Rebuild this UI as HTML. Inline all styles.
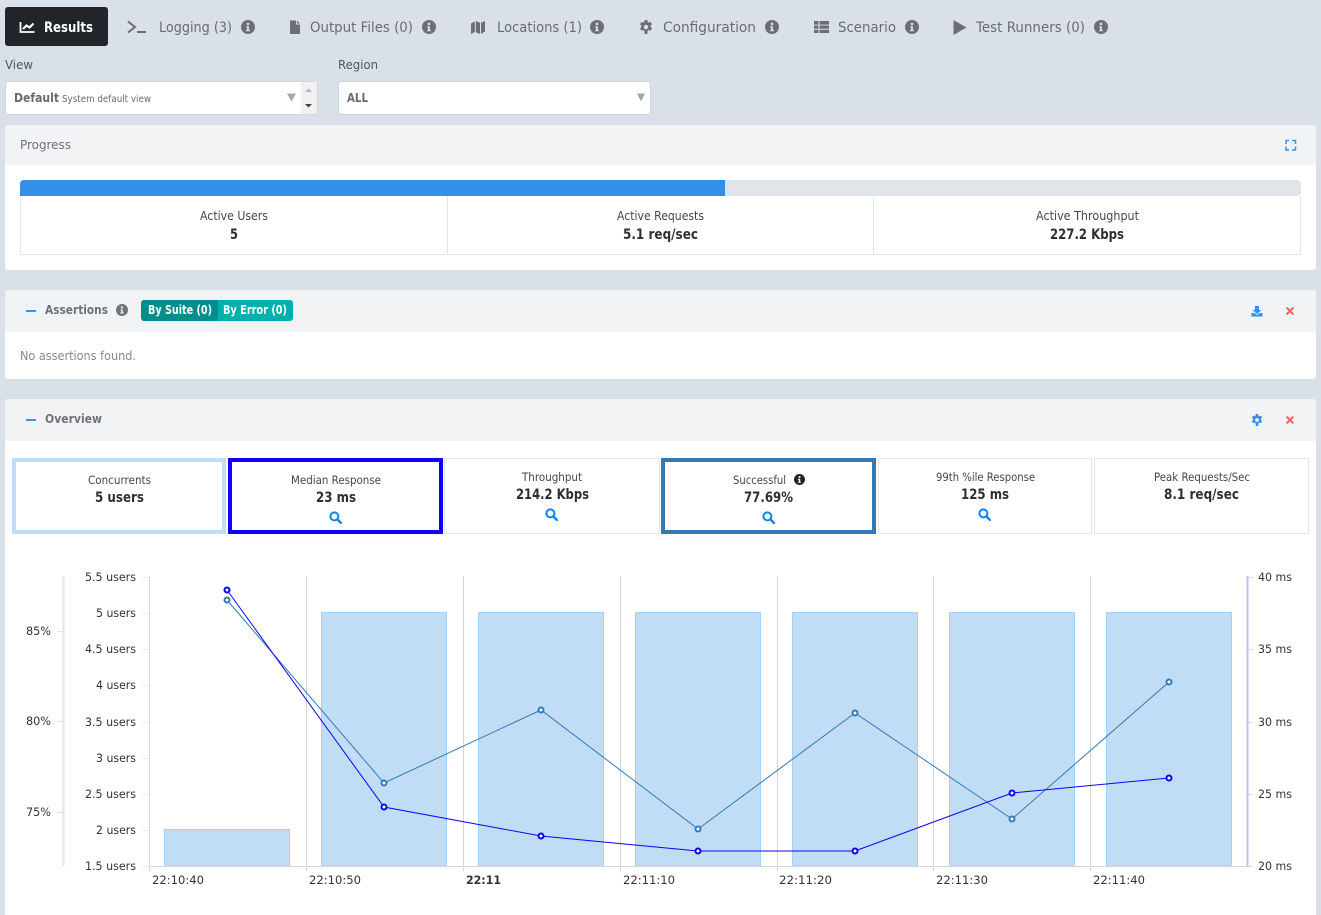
<!DOCTYPE html>
<html><head><meta charset="utf-8"><title>Results</title>
<style>
html,body{margin:0;padding:0;width:1321px;height:915px;overflow:hidden;background:#d9e0e8}
svg{display:block;position:absolute;left:0;top:0}
text{font-family:"DejaVu Sans","Liberation Sans",sans-serif;font-size:12px;fill:#6c6c74}
.tab{font-size:14px;fill:#6a6b72}
.b{font-weight:700}
.lab{fill:#42474d;font-size:12.500px}
.mt{fill:#42474d;font-size:11.500px}
.mv{fill:#2b3036;font-size:14px;font-weight:700}
.ax{fill:#333;font-size:11.500px}
</style></head><body>
<svg width="1321" height="915" viewBox="0 0 1321 915" xmlns="http://www.w3.org/2000/svg">
<defs>
<symbol id="info" viewBox="0 0 14 14"><path fill="currentColor" fill-rule="evenodd" d="M7 0a7 7 0 1 1 0 14A7 7 0 0 1 7 0zM5.800 2.800v2.300h2.400V2.800zM5.200 6.200v1.400h.9v2.200h-.9v1.400h3.600V9.800h-.9V6.200z"/></symbol>
<symbol id="srch" viewBox="0 0 14 14"><circle cx="5.800" cy="5.800" r="4.300" fill="none" stroke="#0d86f2" stroke-width="2.200"/><path d="M9 9l3.800 3.800" stroke="#0d86f2" stroke-width="2.600" stroke-linecap="round"/></symbol>
<symbol id="gear" viewBox="0 0 14 14"><path fill="currentColor" fill-rule="evenodd" d="M5.700 0h2.600l.4 1.900 1.200.7 1.800-.6L13 4.300l-1.400 1.300v1.400L13 8.300l-1.300 2.300-1.800-.6-1.200.7L8.300 14H5.700l-.4-3.300-1.200-.7-1.800.6L1 8.300l1.400-1.300V5.600L1 4.300 2.300 2l1.800.6 1.200-.7zM7 4.800a2.200 2.200 0 1 0 0 4.400 2.200 2.200 0 0 0 0-4.400z"/></symbol>
<symbol id="xx" viewBox="0 0 10 10"><path d="M1.500 1.500l7 7M8.500 1.500l-7 7" stroke="#f9605f" stroke-width="2.600" stroke-linecap="round"/></symbol>
</defs>

<!-- Tabs -->
<rect x="5" y="7" width="103" height="39" rx="3" fill="#212529"/>
<g fill="none" stroke="#fff"><path d="M20.500 22v10H34.500" stroke-width="1.800"/><path d="M23 29l3.500-3.500 3 2 4-4" stroke-width="2.200"/></g>
<text x="44" y="32" textLength="49" lengthAdjust="spacingAndGlyphs" class="b" style="font-size:14.500px;fill:#fff">Results</text>

<path d="M128 21.500l7 5.500-7 5.500" fill="none" stroke="#6d6e75" stroke-width="2"/><rect x="137" y="31" width="9" height="2" fill="#6d6e75"/>
<text x="159" y="32" textLength="73" lengthAdjust="spacingAndGlyphs" class="tab">Logging (3)</text>
<use href="#info" x="241" y="20" width="14" height="14" color="#6d6e75"/>

<path d="M290 20.500h6v4h4v9.500h-10zM297 20.500l3 3h-3z" fill="#6d6e75"/>
<text x="310" y="32" textLength="103" lengthAdjust="spacingAndGlyphs" class="tab">Output Files (0)</text>
<use href="#info" x="422" y="20" width="14" height="14" color="#6d6e75"/>

<path d="M471 23.500l3.800-2v10.500l-3.800 2zM475.800 21l4.200 1.800V34l-4.200-1.800zM481 22.800l4-1.800v10.500l-4 2.500z" fill="#6d6e75"/>
<text x="497" y="32" textLength="85" lengthAdjust="spacingAndGlyphs" class="tab">Locations (1)</text>
<use href="#info" x="590" y="20" width="14" height="14" color="#6d6e75"/>

<use href="#gear" x="639" y="20" width="14" height="14" color="#6d6e75"/>
<text x="663" y="32" textLength="93" lengthAdjust="spacingAndGlyphs" class="tab">Configuration</text>
<use href="#info" x="765" y="20" width="14" height="14" color="#6d6e75"/>

<path d="M814 21h4.500v3.600H814zM819.500 21H829v3.600h-9.500zM814 25.500h4.500v3.300H814zM819.500 25.500H829v3.300h-9.500zM814 29.700h4.500V33H814zM819.500 29.700H829V33h-9.500z" fill="#6d6e75"/>
<text x="838" y="32" textLength="58" lengthAdjust="spacingAndGlyphs" class="tab">Scenario</text>
<use href="#info" x="905" y="20" width="14" height="14" color="#6d6e75"/>

<path d="M953.500 20l13 7.500-13 7.500z" fill="#6d6e75"/>
<text x="976" y="32" textLength="109" lengthAdjust="spacingAndGlyphs" class="tab">Test Runners (0)</text>
<use href="#info" x="1094" y="20" width="14" height="14" color="#6d6e75"/>

<!-- Selects -->
<text x="5" y="69" textLength="28" lengthAdjust="spacingAndGlyphs" style="font-size:12.500px;fill:#50565d">View</text>
<text x="338" y="69" textLength="40" lengthAdjust="spacingAndGlyphs" style="font-size:12.500px;fill:#50565d">Region</text>
<rect x="5.500" y="81.500" width="312" height="33" rx="3" fill="#fff" stroke="#cfd5db"/>
<path d="M301 82h16v32h-16z" fill="#f1f1f1"/>
<text x="14" y="102" textLength="45" lengthAdjust="spacingAndGlyphs" class="b" style="font-size:12.500px;fill:#686b71">Default</text>
<text x="62" y="102" textLength="89" lengthAdjust="spacingAndGlyphs" style="font-size:10px;fill:#686b71">System default view</text>
<path d="M287 93.500h9l-4.500 8z" fill="#a4a7ac"/>
<path d="M305 92l3.500-3.500L312 92z" fill="#b5b5b5"/><path d="M305 104h7l-3.500 3.500z" fill="#444"/>
<rect x="338.500" y="81.500" width="312" height="33" rx="3" fill="#fff" stroke="#cfd5db"/>
<text x="347" y="102" textLength="21" lengthAdjust="spacingAndGlyphs" class="b" style="font-size:12.500px;fill:#686b71">ALL</text>
<path d="M637 93.500h8l-4 8z" fill="#a4a7ac"/>

<!-- Progress panel -->
<rect x="5" y="125" width="1311" height="145" rx="3" fill="#fff"/>
<path d="M5 165v-37a3 3 0 0 1 3-3h1305a3 3 0 0 1 3 3v37z" fill="#f1f3f5"/>
<text x="20" y="149" textLength="51" lengthAdjust="spacingAndGlyphs" style="font-size:12.500px;fill:#6f7379">Progress</text>
<path d="M1286 144v-3.500h3M1292 140.500h3.500v3.500M1295.500 146.500v3.500h-3.500M1289 150h-3v-3.500" fill="none" stroke="#3a97ec" stroke-width="1.500"/>
<rect x="20" y="180" width="1281" height="16" rx="4" fill="#e0e5ea"/>
<path d="M725 180H24a4 4 0 0 0-4 4v12h705z" fill="#3490e6"/>
<path d="M20.500 196v58.500h1280V196M447.500 196v58M873.500 196v58" fill="none" stroke="#e4e7ea"/>
<text x="200" y="220" textLength="68" lengthAdjust="spacingAndGlyphs" class="lab">Active Users</text>
<text x="230" y="239" textLength="8" lengthAdjust="spacingAndGlyphs" class="mv">5</text>
<text x="617" y="220" textLength="87" lengthAdjust="spacingAndGlyphs" class="lab">Active Requests</text>
<text x="623" y="239" textLength="75" lengthAdjust="spacingAndGlyphs" class="mv">5.1 req/sec</text>
<text x="1036" y="220" textLength="103" lengthAdjust="spacingAndGlyphs" class="lab">Active Throughput</text>
<text x="1050" y="239" textLength="74" lengthAdjust="spacingAndGlyphs" class="mv">227.2 Kbps</text>

<!-- Assertions panel -->
<rect x="5" y="290" width="1311" height="89" rx="3" fill="#fff"/>
<path d="M5 332v-39a3 3 0 0 1 3-3h1305a3 3 0 0 1 3 3v39z" fill="#f1f3f5"/>
<rect x="26" y="310" width="10" height="2" fill="#3a93e8"/>
<text x="45" y="314" textLength="63" lengthAdjust="spacingAndGlyphs" class="b" style="font-size:12.500px;fill:#6f7379">Assertions</text>
<use href="#info" x="116" y="304" width="12" height="12" color="#6f7379"/>
<path d="M218 300h-74a3 3 0 0 0-3 3v15a3 3 0 0 0 3 3h74z" fill="#008d8b"/>
<path d="M218 300h72a3 3 0 0 1 3 3v15a3 3 0 0 1-3 3h-72z" fill="#00b0ad"/>
<text x="148" y="314" textLength="64" lengthAdjust="spacingAndGlyphs" class="b" style="font-size:12.500px;fill:#fff">By Suite (0)</text>
<text x="223" y="314" textLength="64" lengthAdjust="spacingAndGlyphs" class="b" style="font-size:12.500px;fill:#fff">By Error (0)</text>
<text x="20" y="360" textLength="116" lengthAdjust="spacingAndGlyphs" style="font-size:12.500px;fill:#85898e">No assertions found.</text>
<path d="M1255 306h4v4h2.500l-4.500 4-4.500-4h2.500z" fill="#3a8fe6"/><path d="M1251.500 313h3l2.500 2 2.500-2h3v3.500h-11z" fill="#3a8fe6"/>
<use href="#xx" x="1286" y="307" width="8" height="8"/>

<!-- Overview panel -->
<rect x="5" y="399" width="1311" height="520" rx="3" fill="#fff"/>
<path d="M5 441v-39a3 3 0 0 1 3-3h1305a3 3 0 0 1 3 3v39z" fill="#f1f3f5"/>
<rect x="26" y="419" width="10" height="2" fill="#3a93e8"/>
<text x="45" y="423" textLength="57" lengthAdjust="spacingAndGlyphs" class="b" style="font-size:12.500px;fill:#6f7379">Overview</text>
<use href="#gear" x="1251" y="414" width="12" height="12" color="#3a8fe6"/>
<use href="#xx" x="1286" y="416" width="8" height="8"/>

<!-- Cards -->
<rect x="14" y="460" width="210" height="72" fill="#fff" stroke="#c0ddf5" stroke-width="4"/>
<text x="88" y="484" textLength="63" lengthAdjust="spacingAndGlyphs" class="mt">Concurrents</text>
<text x="95" y="502" textLength="49" lengthAdjust="spacingAndGlyphs" class="mv">5 users</text>

<rect x="230" y="460" width="211" height="72" fill="#fff" stroke="#1000f5" stroke-width="4"/>
<text x="291" y="484" textLength="90" lengthAdjust="spacingAndGlyphs" class="mt">Median Response</text>
<text x="316" y="502" textLength="40" lengthAdjust="spacingAndGlyphs" class="mv">23 ms</text>
<use href="#srch" x="329" y="511" width="13" height="13"/>

<rect x="444.500" y="458.500" width="215" height="75" fill="#fff" stroke="#e4e7ea"/>
<text x="522" y="481" textLength="60" lengthAdjust="spacingAndGlyphs" class="mt">Throughput</text>
<text x="516" y="499" textLength="73" lengthAdjust="spacingAndGlyphs" class="mv">214.2 Kbps</text>
<use href="#srch" x="545" y="508" width="13" height="13"/>

<rect x="663" y="460" width="211" height="72" fill="#fff" stroke="#337ab7" stroke-width="4"/>
<text x="733" y="484" textLength="53" lengthAdjust="spacingAndGlyphs" class="mt">Successful</text>
<use href="#info" x="794" y="474" width="11" height="11" color="#212529"/>
<text x="744" y="502" textLength="49" lengthAdjust="spacingAndGlyphs" class="mv">77.69%</text>
<use href="#srch" x="762" y="511" width="13" height="13"/>

<rect x="878.500" y="458.500" width="213" height="75" fill="#fff" stroke="#e4e7ea"/>
<text x="936" y="481" textLength="99" lengthAdjust="spacingAndGlyphs" class="mt">99th %ile Response</text>
<text x="961" y="499" textLength="48" lengthAdjust="spacingAndGlyphs" class="mv">125 ms</text>
<use href="#srch" x="978" y="508" width="13" height="13"/>

<rect x="1094.500" y="458.500" width="214" height="75" fill="#fff" stroke="#e4e7ea"/>
<text x="1154" y="481" textLength="96" lengthAdjust="spacingAndGlyphs" class="mt">Peak Requests/Sec</text>
<text x="1164" y="499" textLength="75" lengthAdjust="spacingAndGlyphs" class="mv">8.1 req/sec</text>

<!-- Chart -->
<g fill="#c1ddf6" stroke="#a9d0f1">
<rect x="164.500" y="829.500" width="125" height="36.500"/>
<rect x="321.500" y="612.500" width="125" height="253.500"/>
<rect x="478.500" y="612.500" width="125" height="253.500"/>
<rect x="635.500" y="612.500" width="125" height="253.500"/>
<rect x="792.500" y="612.500" width="125" height="253.500"/>
<rect x="949.500" y="612.500" width="125" height="253.500"/>
<rect x="1106.500" y="612.500" width="125" height="253.500"/>
</g>
<path d="M149.500 576v295M306.500 576v295M463.500 576v295M620.500 576v295M777.500 576v295M933.500 576v295M1090.500 576v295M149 866.500h1098" fill="none" stroke="#d6d6d6"/>
<path d="M63.500 576v290" fill="none" stroke="#d5e6f6" stroke-width="2"/>
<path d="M57 631.500h6M57 721.500h6M57 812.500h6" stroke="#d5e6f6"/>
<path d="M142 577.500h7M142 613.500h7M142 649.500h7M142 685.500h7M142 722.500h7M142 758.500h7M142 794.500h7M142 830.500h7M142 866.500h7" stroke="#e3eefa"/>
<path d="M1247.500 576v290" fill="none" stroke="#c4bdf6" stroke-width="2"/>
<path d="M1247 577.500h6M1247 649.500h6M1247 722.500h6M1247 794.500h6M1247 866.500h6" stroke="#d5d1f8"/>

<polyline points="227,600 384,783 541,710 698,829 855,713 1012,819 1169,682" fill="none" stroke="#337ab7"/>
<polyline points="227,590 384,807 541,836 698,851 855,851 1012,793 1169,778" fill="none" stroke="#1000f5"/>
<g fill="#fff" stroke="#337ab7" stroke-width="2">
<circle cx="227" cy="600" r="2.500"/><circle cx="384" cy="783" r="2.500"/><circle cx="541" cy="710" r="2.500"/><circle cx="698" cy="829" r="2.500"/><circle cx="855" cy="713" r="2.500"/><circle cx="1012" cy="819" r="2.500"/><circle cx="1169" cy="682" r="2.500"/>
</g>
<g fill="#fff" stroke="#1000f5" stroke-width="2">
<circle cx="227" cy="590" r="2.500"/><circle cx="384" cy="807" r="2.500"/><circle cx="541" cy="836" r="2.500"/><circle cx="698" cy="851" r="2.500"/><circle cx="855" cy="851" r="2.500"/><circle cx="1012" cy="793" r="2.500"/><circle cx="1169" cy="778" r="2.500"/>
</g>

<text x="26" y="635" textLength="25" lengthAdjust="spacingAndGlyphs" class="ax">85%</text>
<text x="26" y="725" textLength="25" lengthAdjust="spacingAndGlyphs" class="ax">80%</text>
<text x="26" y="816" textLength="25" lengthAdjust="spacingAndGlyphs" class="ax">75%</text>

<text x="85" y="581" textLength="51" lengthAdjust="spacingAndGlyphs" class="ax">5.5 users</text>
<text x="96" y="617" textLength="40" lengthAdjust="spacingAndGlyphs" class="ax">5 users</text>
<text x="85" y="653" textLength="51" lengthAdjust="spacingAndGlyphs" class="ax">4.5 users</text>
<text x="96" y="689" textLength="40" lengthAdjust="spacingAndGlyphs" class="ax">4 users</text>
<text x="85" y="726" textLength="51" lengthAdjust="spacingAndGlyphs" class="ax">3.5 users</text>
<text x="96" y="762" textLength="40" lengthAdjust="spacingAndGlyphs" class="ax">3 users</text>
<text x="85" y="798" textLength="51" lengthAdjust="spacingAndGlyphs" class="ax">2.5 users</text>
<text x="96" y="834" textLength="40" lengthAdjust="spacingAndGlyphs" class="ax">2 users</text>
<text x="85" y="870" textLength="51" lengthAdjust="spacingAndGlyphs" class="ax">1.5 users</text>

<text x="1258" y="581" textLength="34" lengthAdjust="spacingAndGlyphs" class="ax">40 ms</text>
<text x="1258" y="653" textLength="34" lengthAdjust="spacingAndGlyphs" class="ax">35 ms</text>
<text x="1258" y="726" textLength="34" lengthAdjust="spacingAndGlyphs" class="ax">30 ms</text>
<text x="1258" y="798" textLength="34" lengthAdjust="spacingAndGlyphs" class="ax">25 ms</text>
<text x="1258" y="870" textLength="34" lengthAdjust="spacingAndGlyphs" class="ax">20 ms</text>

<text x="152" y="884" textLength="52" lengthAdjust="spacingAndGlyphs" class="ax">22:10:40</text>
<text x="309" y="884" textLength="52" lengthAdjust="spacingAndGlyphs" class="ax">22:10:50</text>
<text x="466" y="884" textLength="35" lengthAdjust="spacingAndGlyphs" class="ax b">22:11</text>
<text x="623" y="884" textLength="52" lengthAdjust="spacingAndGlyphs" class="ax">22:11:10</text>
<text x="779" y="884" textLength="53" lengthAdjust="spacingAndGlyphs" class="ax">22:11:20</text>
<text x="936" y="884" textLength="52" lengthAdjust="spacingAndGlyphs" class="ax">22:11:30</text>
<text x="1093" y="884" textLength="52" lengthAdjust="spacingAndGlyphs" class="ax">22:11:40</text>
</svg>
</body></html>
